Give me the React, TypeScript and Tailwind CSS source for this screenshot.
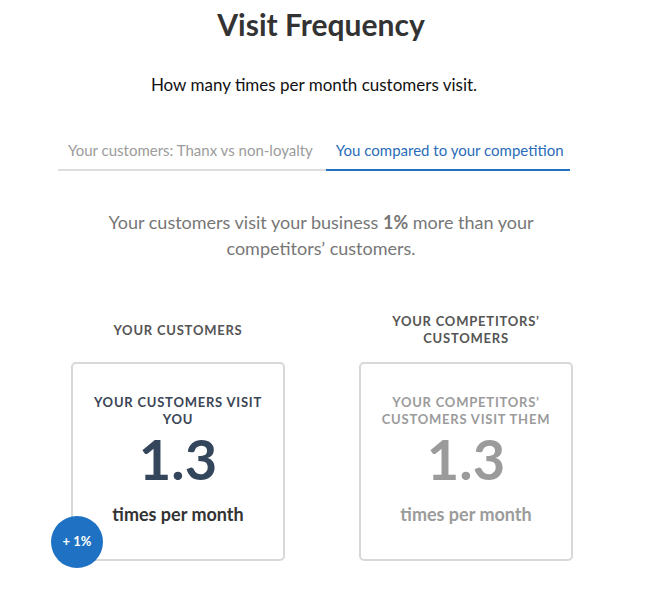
import React from "react";

export default function App() {
  return (
    <div className="w-[668px] h-[601px] bg-white overflow-hidden" style={{ fontFamily: "Lato, 'Open Sans', sans-serif" }}>
      <div className="flex flex-col items-center">
        <h1 className="mt-[5px] mr-[26px] text-[30px] leading-[38px] font-bold text-[#333333]">Visit Frequency</h1>
        <p className="mt-[32px] mr-[40px] text-[17px] leading-[20px] text-[#111111]">How many times per month customers visit.</p>
      </div>
      <div className="mt-[45px] ml-[58px] flex w-[512px] text-[15px] leading-[20px]">
        <div className="pl-[10px] pr-[13px] pb-[9px] border-b-2 border-[#dddddd] text-[#9b9b9b]">Your customers: Thanx vs non-loyalty</div>
        <div className="flex-1 pl-[10px] pb-[9px] border-b-2 border-[#1f72c3] text-[#2a6cb8]">You compared to your competition</div>
      </div>
      <div className="mt-[38px] flex justify-center">
        <p className="mr-[26px] w-[440px] text-center text-[18px] leading-[26px] text-[#777777]">
          Your customers visit your business <span className="font-bold">1%</span> more than your competitors’ customers.
        </p>
      </div>
      <div className="mt-[52px] ml-[34px] grid grid-cols-[288px_288px]">
        <div className="flex flex-col items-center">
          <div className="h-[34px] flex items-center text-[13px] leading-[17px] font-bold tracking-[0.06em] text-[#555555] text-center">YOUR CUSTOMERS</div>
          <div className="relative mt-[15px] w-[214px] h-[199px] border-2 border-[#d8d8d8] rounded-[5px] flex flex-col items-center">
            <div className="mt-[30px] w-[180px] text-center text-[13px] leading-[17px] font-bold tracking-[0.06em] text-[#3a4556]">YOUR CUSTOMERS VISIT YOU</div>
            <div className="mt-[1px] text-[56px] leading-[60px] font-bold text-[#34465c]">1.3</div>
            <div className="mt-[14px] text-[18px] leading-[22px] font-bold text-[#333333]">times per month</div>
            <div className="absolute left-[-22px] top-[152px] w-[52px] h-[52px] rounded-full bg-[#1f72c3] flex items-center justify-center text-white text-[13px] font-bold">+ 1%</div>
          </div>
        </div>
        <div className="flex flex-col items-center">
          <div className="h-[34px] flex items-center text-[13px] leading-[17px] font-bold tracking-[0.06em] text-[#555555] text-center w-[170px] justify-center">YOUR COMPETITORS’ CUSTOMERS</div>
          <div className="mt-[15px] w-[214px] h-[199px] border-2 border-[#d8d8d8] rounded-[5px] flex flex-col items-center">
            <div className="mt-[30px] w-[190px] text-center text-[13px] leading-[17px] font-bold tracking-[0.06em] text-[#9b9b9b]">YOUR COMPETITORS’ CUSTOMERS VISIT THEM</div>
            <div className="mt-[1px] text-[56px] leading-[60px] font-bold text-[#9b9b9b]">1.3</div>
            <div className="mt-[14px] text-[18px] leading-[22px] font-bold text-[#9b9b9b]">times per month</div>
          </div>
        </div>
      </div>
    </div>
  );
}
